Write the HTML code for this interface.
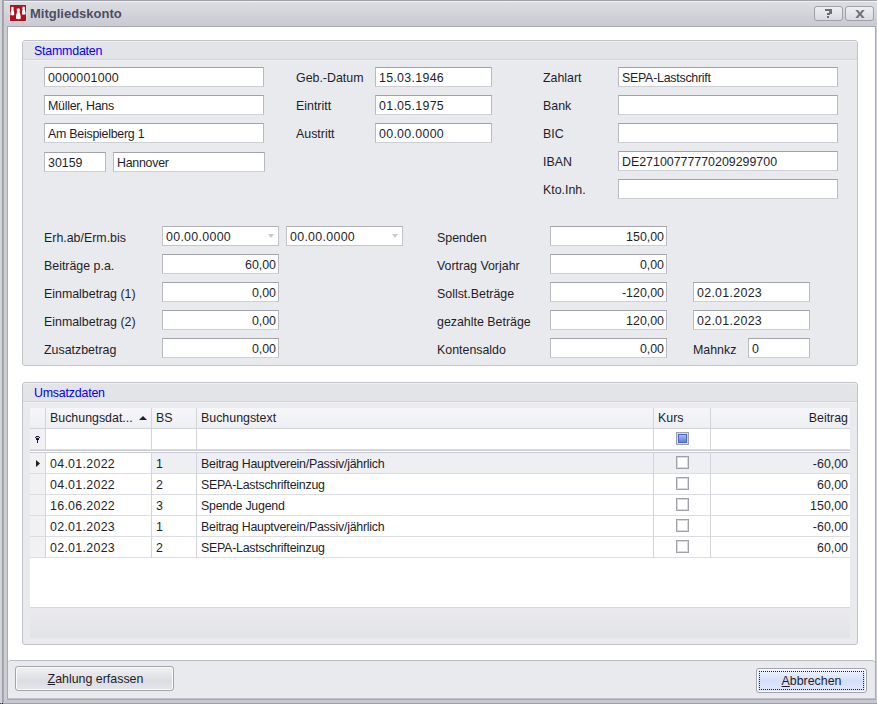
<!DOCTYPE html>
<html><head><meta charset="utf-8">
<style>
*{box-sizing:border-box;margin:0;padding:0}
html,body{width:877px;height:704px;overflow:hidden;background:#cbccd2;font-family:"Liberation Sans",sans-serif;font-size:12.4px;color:#1e1e2a}
.a{position:absolute}
#frame{left:0;top:0;width:877px;height:704px;background:#cdced4}
#title{left:4px;top:0;width:873px;height:26px;background:linear-gradient(#dddee2,#d6d7dc 40%,#cccdd5 80%,#c9cad2);border-top:1px solid #9fa0a9}
#title:after{content:"";position:absolute;left:0;top:0;width:873px;height:1px;background:#eff0f2}
#ttl{left:30px;top:5px;font-weight:bold;font-size:13px;color:#4c4d60;line-height:18px;white-space:nowrap}
#content{left:7px;top:26px;width:869px;height:674px;background:#fff;border:1px solid #a9aab1;border-bottom:none}
.tbtn{top:6px;height:15px;border:1px solid #9fa0a8;border-radius:3px;background:linear-gradient(#eeeff2,#d9dadf);}
.grp{position:absolute;border:1px solid #c3c4cb;border-radius:3px;background:#e9eaee}
.ghd{position:absolute;left:0;top:0;right:0;height:19px;background:#e3e4e8;border-top:1px solid #eff0f2;border-bottom:1px solid #d2d3d8;border-radius:3px 3px 0 0}
.ghd2{position:absolute;left:0;top:19px;right:0;height:1px;background:#f1f1f4}
.cap{position:absolute;left:11px;top:1px;color:#0000f2;letter-spacing:-.2px;line-height:18px;white-space:nowrap}
.tb{position:absolute;height:20px;background:#fff;border:1px solid #b9bac1;border-top-color:#a0a1a9;border-bottom-color:#cecfd4;line-height:20px;padding:0 0 0 3px;white-space:nowrap;overflow:hidden}
.r{text-align:right;padding:0 2px 0 0}
.lb{position:absolute;line-height:22px;white-space:nowrap;color:#1e1e2a}
.dd{position:absolute;right:4px;top:7px;width:0;height:0;border-left:3.5px solid transparent;border-right:3.5px solid transparent;border-top:4px solid #c9cace}
.gh{position:absolute;top:408px;line-height:20px;white-space:nowrap;color:#1e1e2a}
.gr{position:absolute;line-height:25px;white-space:nowrap;color:#1e1e2a}
.cb{position:absolute;left:676px;width:13px;height:13px;border:1px solid #9fa0a8;background:#fff;box-shadow:inset 0 0 0 1px #d9dade}
.btn{border:1px solid #a3a4ac;border-radius:3px;box-shadow:inset 0 0 0 1px #fbfbfc;background:linear-gradient(#f1f1f4,#e2e3e7 45%,#dcdde2 60%,#e5e6ea);text-align:center;line-height:25px;color:#1e1e2a}
</style></head><body>
<div id="frame" class="a"></div><div class="a" style="left:0;top:0;width:2px;height:704px;background:#d3d4da"></div><div class="a" style="left:2px;top:0;width:2px;height:704px;background:linear-gradient(90deg,#9c9da6 50%,#a9aab2 50%)"></div>
<div id="title" class="a"></div>
<svg class="a" style="left:9px;top:4px" width="18" height="18" viewBox="-1 -1 18 18"><rect x="-1" y="-1" width="18" height="18" fill="#d3dde6" opacity="0.8"/><rect x="0" y="0" width="16" height="16" fill="#b2121d"/><g fill="#fff"><circle cx="2.4" cy="3.0" r="1.35"/><path d="M1.4,3.8C1.4,4.8 0.5,6.4 0.5,10.0Q2.4,10.9 4.3,10.0C4.3,6.4 3.4,4.8 3.4,3.8Z"/><circle cx="8.3" cy="5.0" r="1.75"/><path d="M7.300000000000001,6.0C7.300000000000001,7.0 6.0,8.6 6.0,13.700000000000001Q8.4,14.600000000000001 10.8,13.700000000000001C10.8,8.6 9.3,7.0 9.3,6.0Z"/><circle cx="13.6" cy="2.9" r="1.35"/><path d="M12.6,3.7C12.6,4.7 11.9,6.300000000000001 11.9,9.3Q13.8,10.200000000000001 15.7,9.3C15.7,6.300000000000001 14.6,4.7 14.6,3.7Z"/></g></svg>
<div id="ttl" class="a">Mitgliedskonto</div>
<div class="a tbtn" style="left:814px;width:29px"><svg class="a" style="left:10px;top:2px" width="8" height="10" viewBox="0 0 8 10" shape-rendering="crispEdges"><path d="M0,0H7V5H5V6H2V4H4V2H0Z" fill="#6d6e76"/><rect x="2" y="7" width="2" height="2" fill="#6d6e76"/></svg></div>
<div class="a tbtn" style="left:845px;width:29px"><svg class="a" style="left:9px;top:3px" width="10" height="8" viewBox="0 0 10 8"><path d="M0.3,0H3L5,2.4L7,0H9.7L6.4,4L9.7,8H7L5,5.6L3,8H0.3L3.6,4Z" fill="#707179"/></svg></div>
<div id="content" class="a"></div>

<!-- Stammdaten group -->
<div class="grp" style="left:22px;top:40px;width:836px;height:326px">
  <div class="ghd"></div><div class="ghd2"></div>
  <div class="cap">Stammdaten</div>
</div>

<div class="tb" style="left:44px;top:67px;width:220px;letter-spacing:.2px">0000001000</div>
<div class="tb" style="left:44px;top:95px;width:220px;letter-spacing:-.25px">Müller, Hans</div>
<div class="tb" style="left:44px;top:123px;width:220px;letter-spacing:-.25px">Am Beispielberg 1</div>
<div class="tb" style="left:44px;top:152px;width:62px">30159</div>
<div class="tb" style="left:113px;top:152px;width:152px;letter-spacing:-.25px">Hannover</div>

<div class="lb" style="left:296px;top:67px">Geb.-Datum</div>
<div class="lb" style="left:296px;top:95px">Eintritt</div>
<div class="lb" style="left:296px;top:123px">Austritt</div>
<div class="tb" style="left:375px;top:67px;width:117px;letter-spacing:.3px">15.03.1946</div>
<div class="tb" style="left:375px;top:95px;width:117px;letter-spacing:.3px">01.05.1975</div>
<div class="tb" style="left:375px;top:123px;width:117px;letter-spacing:.3px">00.00.0000</div>

<div class="lb" style="left:543px;top:67px">Zahlart</div>
<div class="lb" style="left:543px;top:95px">Bank</div>
<div class="lb" style="left:543px;top:123px">BIC</div>
<div class="lb" style="left:543px;top:151px">IBAN</div>
<div class="lb" style="left:543px;top:179px">Kto.Inh.</div>
<div class="tb" style="left:618px;top:67px;width:220px;letter-spacing:-.25px">SEPA-Lastschrift</div>
<div class="tb" style="left:618px;top:95px;width:220px"></div>
<div class="tb" style="left:618px;top:123px;width:220px"></div>
<div class="tb" style="left:618px;top:151px;width:220px">DE27100777770209299700</div>
<div class="tb" style="left:618px;top:179px;width:220px"></div>

<div class="lb" style="left:44px;top:227px">Erh.ab/Erm.bis</div>
<div class="lb" style="left:44px;top:255px">Beiträge p.a.</div>
<div class="lb" style="left:44px;top:283px">Einmalbetrag (1)</div>
<div class="lb" style="left:44px;top:311px">Einmalbetrag (2)</div>
<div class="lb" style="left:44px;top:339px">Zusatzbetrag</div>
<div class="tb" style="border-color:#c3c4ca;border-top-color:#afb0b7;left:162px;top:226px;width:117px;letter-spacing:.3px">00.00.0000<div class="dd"></div></div>
<div class="tb" style="border-color:#c3c4ca;border-top-color:#afb0b7;left:286px;top:226px;width:117px;letter-spacing:.3px">00.00.0000<div class="dd"></div></div>
<div class="tb r" style="left:162px;top:254px;width:117px">60,00</div>
<div class="tb r" style="left:162px;top:282px;width:117px">0,00</div>
<div class="tb r" style="left:162px;top:310px;width:117px">0,00</div>
<div class="tb r" style="left:162px;top:338px;width:117px">0,00</div>

<div class="lb" style="left:437px;top:227px">Spenden</div>
<div class="lb" style="left:437px;top:255px">Vortrag Vorjahr</div>
<div class="lb" style="left:437px;top:283px">Sollst.Beträge</div>
<div class="lb" style="left:437px;top:311px">gezahlte Beträge</div>
<div class="lb" style="left:437px;top:339px">Kontensaldo</div>
<div class="tb r" style="left:550px;top:226px;width:117px">150,00</div>
<div class="tb r" style="left:550px;top:254px;width:117px">0,00</div>
<div class="tb r" style="left:550px;top:282px;width:117px">-120,00</div>
<div class="tb r" style="left:550px;top:310px;width:117px">120,00</div>
<div class="tb r" style="left:550px;top:338px;width:117px">0,00</div>
<div class="tb" style="left:693px;top:282px;width:117px;letter-spacing:.3px">02.01.2023</div>
<div class="tb" style="left:693px;top:310px;width:117px;letter-spacing:.3px">02.01.2023</div>
<div class="lb" style="left:693px;top:339px">Mahnkz</div>
<div class="tb" style="left:748px;top:338px;width:62px">0</div>

<!-- Umsatzdaten group -->
<div class="grp" style="left:22px;top:382px;width:836px;height:263px">
  <div class="ghd"></div><div class="ghd2"></div>
  <div class="cap">Umsatzdaten</div>
</div>


<!-- grid -->
<div class="a" style="left:30px;top:408px;width:820px;height:230px;background:#fff"></div>
<div class="a" style="left:30px;top:408px;width:820px;height:20px;background:linear-gradient(#f6f6f8,#eeeff2)"></div>
<div class="a" style="left:30px;top:428px;width:820px;height:1px;background:#d3d4da"></div>
<div class="a" style="left:30px;top:429px;width:15px;height:20px;background:#f1f1f4"></div>
<div class="a" style="left:30px;top:449px;width:820px;height:4px;background:linear-gradient(#dcdde2 25%,#c9cad3 25%,#c9cad3 50%,#fff 50%,#fff 75%,#c9cad3 75%)"></div>
<div class="a" style="left:30px;top:453px;width:15px;height:105px;background:#f1f1f4"></div>
<div class="a" style="left:152px;top:453px;width:698px;height:20px;background:#eeeff3"></div>
<div class="a" style="left:30px;top:473px;width:820px;height:1px;background:#dcdde2"></div>
<div class="a" style="left:30px;top:494px;width:820px;height:1px;background:#dcdde2"></div>
<div class="a" style="left:30px;top:515px;width:820px;height:1px;background:#dcdde2"></div>
<div class="a" style="left:30px;top:536px;width:820px;height:1px;background:#dcdde2"></div>
<div class="a" style="left:30px;top:557px;width:820px;height:1px;background:#dcdde2"></div>
<div class="a" style="left:45px;top:408px;width:1px;height:41px;background:#d3d4da"></div><div class="a" style="left:45px;top:453px;width:1px;height:105px;background:#d3d4da"></div>
<div class="a" style="left:151px;top:408px;width:1px;height:41px;background:#d3d4da"></div><div class="a" style="left:151px;top:453px;width:1px;height:105px;background:#d3d4da"></div>
<div class="a" style="left:196px;top:408px;width:1px;height:41px;background:#d3d4da"></div><div class="a" style="left:196px;top:453px;width:1px;height:105px;background:#d3d4da"></div>
<div class="a" style="left:653px;top:408px;width:1px;height:41px;background:#d3d4da"></div><div class="a" style="left:653px;top:453px;width:1px;height:105px;background:#d3d4da"></div>
<div class="a" style="left:710px;top:408px;width:1px;height:41px;background:#d3d4da"></div><div class="a" style="left:710px;top:453px;width:1px;height:105px;background:#d3d4da"></div>
<div class="gh" style="left:50px">Buchungsdat...</div>
<div class="a" style="left:139px;top:416px;width:0;height:0;border-left:4px solid transparent;border-right:4px solid transparent;border-bottom:4px solid #1f1f2a"></div>
<div class="gh" style="left:156px">BS</div>
<div class="gh" style="left:201px">Buchungstext</div>
<div class="gh" style="left:658px">Kurs</div>
<div class="gh" style="left:711px;width:137px;text-align:right">Beitrag</div>
<div class="cb" style="top:432px"><div class="a" style="left:1px;top:1px;width:9px;height:9px;border:1px solid #4a6cc8;background:linear-gradient(#a8bdf0,#5a80da)"></div></div>
<div class="gr" style="left:50px;top:452px;letter-spacing:.3px">04.01.2022</div><div class="gr" style="left:156px;top:452px">1</div><div class="gr" style="left:201px;top:452px;letter-spacing:-.25px">Beitrag Hauptverein/Passiv/jährlich</div><div class="gr" style="left:711px;top:452px;width:137px;text-align:right">-60,00</div>
<div class="cb" style="top:456px"></div>
<div class="gr" style="left:50px;top:473px;letter-spacing:.3px">04.01.2022</div><div class="gr" style="left:156px;top:473px">2</div><div class="gr" style="left:201px;top:473px;letter-spacing:-.25px">SEPA-Lastschrifteinzug</div><div class="gr" style="left:711px;top:473px;width:137px;text-align:right">60,00</div>
<div class="cb" style="top:477px"></div>
<div class="gr" style="left:50px;top:494px;letter-spacing:.3px">16.06.2022</div><div class="gr" style="left:156px;top:494px">3</div><div class="gr" style="left:201px;top:494px;letter-spacing:-.25px">Spende Jugend</div><div class="gr" style="left:711px;top:494px;width:137px;text-align:right">150,00</div>
<div class="cb" style="top:498px"></div>
<div class="gr" style="left:50px;top:515px;letter-spacing:.3px">02.01.2023</div><div class="gr" style="left:156px;top:515px">1</div><div class="gr" style="left:201px;top:515px;letter-spacing:-.25px">Beitrag Hauptverein/Passiv/jährlich</div><div class="gr" style="left:711px;top:515px;width:137px;text-align:right">-60,00</div>
<div class="cb" style="top:519px"></div>
<div class="gr" style="left:50px;top:536px;letter-spacing:.3px">02.01.2023</div><div class="gr" style="left:156px;top:536px">2</div><div class="gr" style="left:201px;top:536px;letter-spacing:-.25px">SEPA-Lastschrifteinzug</div><div class="gr" style="left:711px;top:536px;width:137px;text-align:right">60,00</div>
<div class="cb" style="top:540px"></div>
<svg class="a" style="left:36px;top:460px" width="4" height="7" viewBox="0 0 4 7"><path d="M0,0L4,3.5L0,7Z" fill="#1f1f2a"/></svg><svg class="a" style="left:35px;top:436px" width="5" height="7" viewBox="0 0 5 7" shape-rendering="crispEdges"><path d="M1,0H4V1H1ZM0,1H1V2H0ZM4,1H5V2H4ZM1,2H4V3H1ZM1,3H4V4H1Z" fill="#17143a"/><rect x="1" y="1" width="3" height="1" fill="#c9c9d6"/><rect x="2" y="4" width="1" height="3" fill="#17143a"/></svg>
<div class="a" style="left:30px;top:607px;width:820px;height:31px;background:linear-gradient(#ebebee,#e2e3e7);border-top:1px solid #d6d7dc"></div>

<!-- bottom panel -->
<div class="a" style="left:8px;top:660px;width:867px;height:38px;background:linear-gradient(#e9eaee 95%,#ecedf0);border-top:1px solid #babbc2;border-radius:3px 3px 0 0"></div>
<div class="a" style="left:8px;top:698px;width:867px;height:1px;background:#bfc0c7"></div><div class="a" style="left:7px;top:699px;width:869px;height:1px;background:#a8a9b2"></div><div class="a" style="left:4px;top:700px;width:873px;height:3px;background:#c8c9d0"></div><div class="a" style="left:4px;top:703px;width:873px;height:1px;background:#9fa0a9"></div>
<div class="btn a" style="left:15px;top:666px;width:159px;height:25px;padding-left:2px"><span style="text-decoration:underline">Z</span>ahlung erfassen</div>
<div class="btn a" style="left:756px;top:668px;width:111px;height:25px;background:linear-gradient(#f3f6fe,#d5dffa 50%,#e3e9fc)"><div class="a" style="left:2px;top:2px;right:2px;bottom:2px;border:1px dotted #222"></div><span style="text-decoration:underline">A</span>bbrechen</div>
<div class="a" style="left:0;top:703px;width:1px;height:1px;background:#f00"></div><div class="a" style="left:1px;top:703px;width:1px;height:1px;background:#0f0"></div><div class="a" style="left:2px;top:703px;width:1px;height:1px;background:#00f"></div>
</body></html>
